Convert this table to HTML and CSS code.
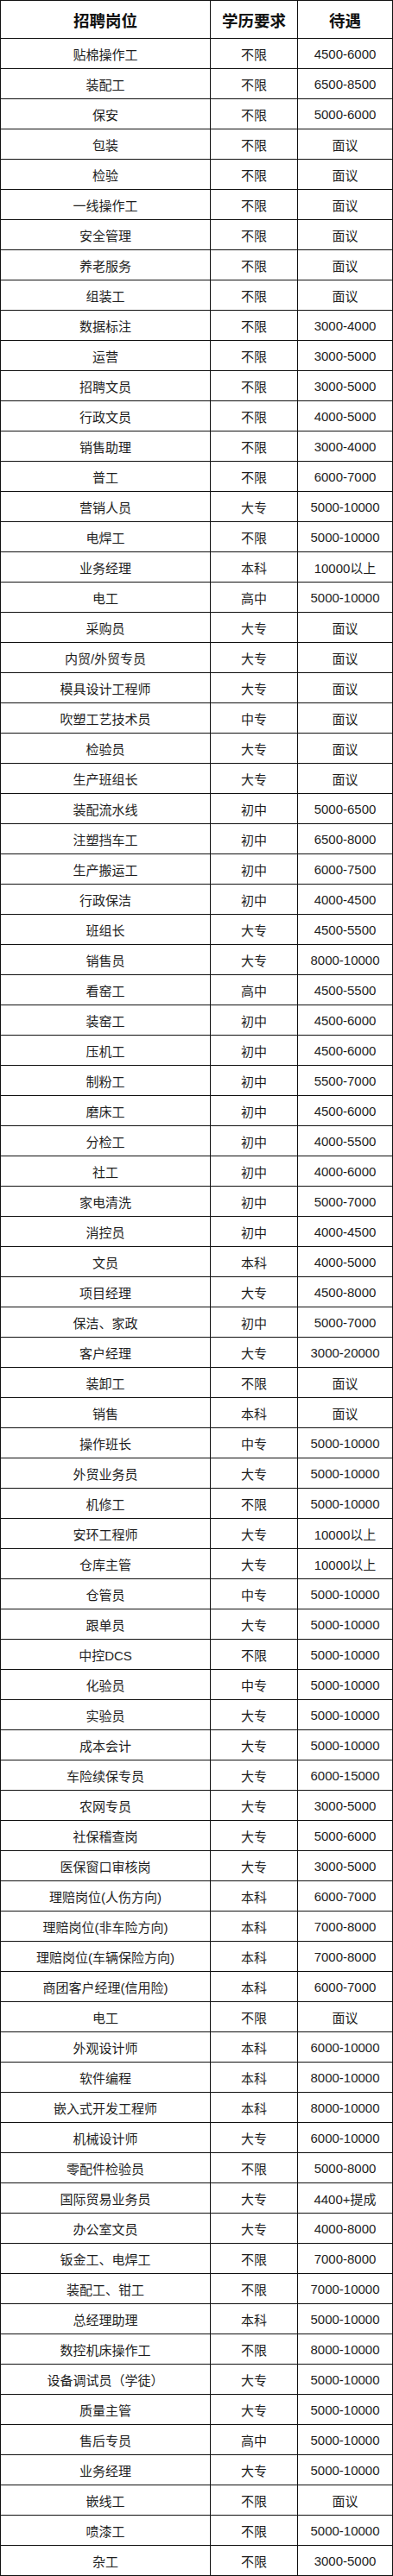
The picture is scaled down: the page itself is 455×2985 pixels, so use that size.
FILE: index.html
```html
<!DOCTYPE html>
<html lang="zh-CN">
<head>
<meta charset="utf-8">
<title>招聘岗位</title>
<link rel="stylesheet" href="styles.css">
</head>
<body>
<div class="table">
<div class="cell head">招聘岗位</div><div class="cell head">学历要求</div><div class="cell head">待遇</div>
<div class="cell">贴棉操作工</div><div class="cell">不限</div><div class="cell">4500-6000</div>
<div class="cell">装配工</div><div class="cell">不限</div><div class="cell">6500-8500</div>
<div class="cell">保安</div><div class="cell">不限</div><div class="cell">5000-6000</div>
<div class="cell">包装</div><div class="cell">不限</div><div class="cell">面议</div>
<div class="cell">检验</div><div class="cell">不限</div><div class="cell">面议</div>
<div class="cell">一线操作工</div><div class="cell">不限</div><div class="cell">面议</div>
<div class="cell">安全管理</div><div class="cell">不限</div><div class="cell">面议</div>
<div class="cell">养老服务</div><div class="cell">不限</div><div class="cell">面议</div>
<div class="cell">组装工</div><div class="cell">不限</div><div class="cell">面议</div>
<div class="cell">数据标注</div><div class="cell">不限</div><div class="cell">3000-4000</div>
<div class="cell">运营</div><div class="cell">不限</div><div class="cell">3000-5000</div>
<div class="cell">招聘文员</div><div class="cell">不限</div><div class="cell">3000-5000</div>
<div class="cell">行政文员</div><div class="cell">不限</div><div class="cell">4000-5000</div>
<div class="cell">销售助理</div><div class="cell">不限</div><div class="cell">3000-4000</div>
<div class="cell">普工</div><div class="cell">不限</div><div class="cell">6000-7000</div>
<div class="cell">营销人员</div><div class="cell">大专</div><div class="cell">5000-10000</div>
<div class="cell">电焊工</div><div class="cell">不限</div><div class="cell">5000-10000</div>
<div class="cell">业务经理</div><div class="cell">本科</div><div class="cell">10000以上</div>
<div class="cell">电工</div><div class="cell">高中</div><div class="cell">5000-10000</div>
<div class="cell">采购员</div><div class="cell">大专</div><div class="cell">面议</div>
<div class="cell">内贸/外贸专员</div><div class="cell">大专</div><div class="cell">面议</div>
<div class="cell">模具设计工程师</div><div class="cell">大专</div><div class="cell">面议</div>
<div class="cell">吹塑工艺技术员</div><div class="cell">中专</div><div class="cell">面议</div>
<div class="cell">检验员</div><div class="cell">大专</div><div class="cell">面议</div>
<div class="cell">生产班组长</div><div class="cell">大专</div><div class="cell">面议</div>
<div class="cell">装配流水线</div><div class="cell">初中</div><div class="cell">5000-6500</div>
<div class="cell">注塑挡车工</div><div class="cell">初中</div><div class="cell">6500-8000</div>
<div class="cell">生产搬运工</div><div class="cell">初中</div><div class="cell">6000-7500</div>
<div class="cell">行政保洁</div><div class="cell">初中</div><div class="cell">4000-4500</div>
<div class="cell">班组长</div><div class="cell">大专</div><div class="cell">4500-5500</div>
<div class="cell">销售员</div><div class="cell">大专</div><div class="cell">8000-10000</div>
<div class="cell">看窑工</div><div class="cell">高中</div><div class="cell">4500-5500</div>
<div class="cell">装窑工</div><div class="cell">初中</div><div class="cell">4500-6000</div>
<div class="cell">压机工</div><div class="cell">初中</div><div class="cell">4500-6000</div>
<div class="cell">制粉工</div><div class="cell">初中</div><div class="cell">5500-7000</div>
<div class="cell">磨床工</div><div class="cell">初中</div><div class="cell">4500-6000</div>
<div class="cell">分检工</div><div class="cell">初中</div><div class="cell">4000-5500</div>
<div class="cell">社工</div><div class="cell">初中</div><div class="cell">4000-6000</div>
<div class="cell">家电清洗</div><div class="cell">初中</div><div class="cell">5000-7000</div>
<div class="cell">消控员</div><div class="cell">初中</div><div class="cell">4000-4500</div>
<div class="cell">文员</div><div class="cell">本科</div><div class="cell">4000-5000</div>
<div class="cell">项目经理</div><div class="cell">大专</div><div class="cell">4500-8000</div>
<div class="cell">保洁、家政</div><div class="cell">初中</div><div class="cell">5000-7000</div>
<div class="cell">客户经理</div><div class="cell">大专</div><div class="cell">3000-20000</div>
<div class="cell">装卸工</div><div class="cell">不限</div><div class="cell">面议</div>
<div class="cell">销售</div><div class="cell">本科</div><div class="cell">面议</div>
<div class="cell">操作班长</div><div class="cell">中专</div><div class="cell">5000-10000</div>
<div class="cell">外贸业务员</div><div class="cell">大专</div><div class="cell">5000-10000</div>
<div class="cell">机修工</div><div class="cell">不限</div><div class="cell">5000-10000</div>
<div class="cell">安环工程师</div><div class="cell">大专</div><div class="cell">10000以上</div>
<div class="cell">仓库主管</div><div class="cell">大专</div><div class="cell">10000以上</div>
<div class="cell">仓管员</div><div class="cell">中专</div><div class="cell">5000-10000</div>
<div class="cell">跟单员</div><div class="cell">大专</div><div class="cell">5000-10000</div>
<div class="cell">中控DCS</div><div class="cell">不限</div><div class="cell">5000-10000</div>
<div class="cell">化验员</div><div class="cell">中专</div><div class="cell">5000-10000</div>
<div class="cell">实验员</div><div class="cell">大专</div><div class="cell">5000-10000</div>
<div class="cell">成本会计</div><div class="cell">大专</div><div class="cell">5000-10000</div>
<div class="cell">车险续保专员</div><div class="cell">大专</div><div class="cell">6000-15000</div>
<div class="cell">农网专员</div><div class="cell">大专</div><div class="cell">3000-5000</div>
<div class="cell">社保稽查岗</div><div class="cell">大专</div><div class="cell">5000-6000</div>
<div class="cell">医保窗口审核岗</div><div class="cell">大专</div><div class="cell">3000-5000</div>
<div class="cell">理赔岗位(人伤方向)</div><div class="cell">本科</div><div class="cell">6000-7000</div>
<div class="cell">理赔岗位(非车险方向)</div><div class="cell">本科</div><div class="cell">7000-8000</div>
<div class="cell">理赔岗位(车辆保险方向)</div><div class="cell">本科</div><div class="cell">7000-8000</div>
<div class="cell">商团客户经理(信用险)</div><div class="cell">本科</div><div class="cell">6000-7000</div>
<div class="cell">电工</div><div class="cell">不限</div><div class="cell">面议</div>
<div class="cell">外观设计师</div><div class="cell">本科</div><div class="cell">6000-10000</div>
<div class="cell">软件编程</div><div class="cell">本科</div><div class="cell">8000-10000</div>
<div class="cell">嵌入式开发工程师</div><div class="cell">本科</div><div class="cell">8000-10000</div>
<div class="cell">机械设计师</div><div class="cell">大专</div><div class="cell">6000-10000</div>
<div class="cell">零配件检验员</div><div class="cell">不限</div><div class="cell">5000-8000</div>
<div class="cell">国际贸易业务员</div><div class="cell">大专</div><div class="cell">4400+提成</div>
<div class="cell">办公室文员</div><div class="cell">大专</div><div class="cell">4000-8000</div>
<div class="cell">钣金工、电焊工</div><div class="cell">不限</div><div class="cell">7000-8000</div>
<div class="cell">装配工、钳工</div><div class="cell">不限</div><div class="cell">7000-10000</div>
<div class="cell">总经理助理</div><div class="cell">本科</div><div class="cell">5000-10000</div>
<div class="cell">数控机床操作工</div><div class="cell">不限</div><div class="cell">8000-10000</div>
<div class="cell">设备调试员（学徒）</div><div class="cell">大专</div><div class="cell">5000-10000</div>
<div class="cell">质量主管</div><div class="cell">大专</div><div class="cell">5000-10000</div>
<div class="cell">售后专员</div><div class="cell">高中</div><div class="cell">5000-10000</div>
<div class="cell">业务经理</div><div class="cell">大专</div><div class="cell">5000-10000</div>
<div class="cell">嵌线工</div><div class="cell">不限</div><div class="cell">面议</div>
<div class="cell">喷漆工</div><div class="cell">不限</div><div class="cell">5000-10000</div>
<div class="cell">杂工</div><div class="cell">不限</div><div class="cell">3000-5000</div>
</div>
</body>
</html>
```

FILE: styles.css
```css
html, body {
  margin: 0;
  padding: 0;
  background: #ffffff;
}

.table {
  display: grid;
  grid-template-columns: 243px 101px 110px;
  width: 455px;
  border-top: 1px solid #111;
  border-left: 1px solid #111;
  font-family: "Liberation Sans", "Noto Sans CJK SC", sans-serif;
  color: #1e1e1e;
}

.cell {
  box-sizing: border-box;
  height: 35px;
  border-right: 1px solid #111;
  border-bottom: 1px solid #111;
  display: flex;
  align-items: center;
  justify-content: center;
  font-size: 15px;
  white-space: nowrap;
}

.head {
  height: 44px;
  font-size: 18.5px;
  font-weight: bold;
  color: #111;
}
```
